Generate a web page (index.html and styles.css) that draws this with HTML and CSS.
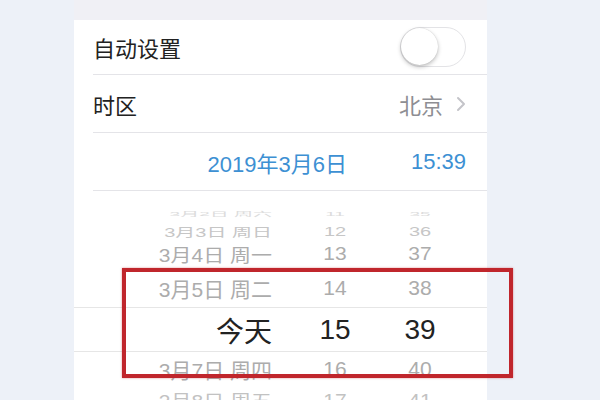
FILE: index.html
```html
<!DOCTYPE html>
<html lang="zh-CN">
<head>
    <meta charset="UTF-8">
    <meta name="viewport" content="width=device-width, initial-scale=1.0">
    <title>日期与时间</title>
    <link rel="stylesheet" href="styles.css">
</head>
<body>
    <div class="screen">
        <div class="group-gap"></div>

        <div class="cell">
            <div class="cell-inner">
                <span class="cell-title">自动设置</span>
                <div class="switch"><div class="knob"></div></div>
            </div>
        </div>

        <div class="cell">
            <div class="cell-inner">
                <span class="cell-title">时区</span>
                <span class="cell-value">北京<span class="chevron">
                    <svg width="10" height="16" viewBox="0 0 10 16"><path d="M2 2 L8 8 L2 14" fill="none" stroke="#c4c4c9" stroke-width="2" stroke-linecap="round" stroke-linejoin="round"/></svg>
                </span></span>
            </div>
        </div>

        <div class="cell">
            <div class="cell-inner date-line">
                <span class="date-text">2019年3月6日</span>
                <span class="time-text">15:39</span>
            </div>
        </div>

        <div class="picker">
            <div class="wheel-row far-3"><span>3月2日 周六</span><span>11</span><span>35</span></div>
            <div class="wheel-row far-2"><span>3月3日 周日</span><span>12</span><span>36</span></div>
            <div class="wheel-row far-1"><span>3月4日 周一</span><span>13</span><span>37</span></div>
            <div class="wheel-row near"><span>3月5日 周二</span><span>14</span><span>38</span></div>
            <div class="wheel-row current"><span>今天</span><span>15</span><span>39</span></div>
            <div class="wheel-row near below"><span>3月7日 周四</span><span>16</span><span>40</span></div>
            <div class="wheel-row far-1 below"><span>3月8日 周五</span><span>17</span><span>41</span></div>
        </div>
    </div>

    <div class="mark"></div>
</body>
</html>
```

FILE: styles.css
```css
body {
    margin: 0;
    height: 400px;
    background-color: #edf1f8;
    font-family: "Liberation Sans", "Noto Sans CJK SC", sans-serif;
    color: #222;
    overflow: hidden;
}

.screen {
    margin-left: 74px;
    width: 413px;
    height: 400px;
    background-color: #fff;
    overflow: hidden;
}

.group-gap {
    height: 20px;
    background-color: #f0f0f5;
}

.cell {
    padding-left: 19px;
}

.cell-inner {
    display: flex;
    align-items: center;
    justify-content: space-between;
    height: 54px;
    padding-right: 21px;
    border-bottom: 1px solid #e4e4e8;
}

.cell + .cell .cell-inner {
    height: 57px;
}

.cell-title {
    font-size: 22px;
}

.cell-value {
    display: flex;
    align-items: center;
    gap: 13px;
    font-size: 22px;
    color: #8e8e93;
}

.chevron {
    display: flex;
}

.switch {
    width: 64px;
    height: 38px;
    border-radius: 20px;
    border: 1px solid #e3e3e6;
    background-color: #fff;
    position: relative;
}

.knob {
    position: absolute;
    left: 0;
    top: 0;
    width: 37px;
    height: 37px;
    border-radius: 50%;
    background-color: #fff;
    box-shadow: 0 2px 4px rgba(0, 0, 0, 0.25), 0 0 1px rgba(0, 0, 0, 0.2);
}

.date-line {
    justify-content: flex-end;
    gap: 64px;
    color: #3d90d3;
    font-size: 22px;
}

/* wheel picker */
.picker {
    padding-top: 14px;
}

.wheel-row {
    display: grid;
    grid-template-columns: 198px 126px 44px;
    align-items: center;
    color: #acacac;
    font-size: 21px;
    white-space: nowrap;
}

.wheel-row span:first-child {
    text-align: right;
}

.wheel-row span {
    text-align: center;
}

.far-3 {
    height: 14px;
    color: #dcdcdc;
    transform: scaleY(0.3);
    font-size: 19px;
}

.far-2 {
    height: 20px;
    color: #c6c6c6;
    transform: scaleY(0.6);
    font-size: 20px;
}

.far-1 {
    height: 30px;
    transform: scaleY(0.85);
}

.near {
    height: 38px;
}

.near.below {
    height: 34px;
}

.far-1.below {
    height: 26px;
    color: #c2c2c2;
}

.current {
    height: 43px;
    border-top: 1px solid #e6e6e6;
    border-bottom: 1px solid #e6e6e6;
    color: #222;
    font-size: 28px;
}

/* red highlight drawn over the screenshot */
.mark {
    position: absolute;
    left: 122px;
    top: 268px;
    width: 383px;
    height: 102px;
    border: 4px solid #c0262c;
    box-shadow: 0 0 2px rgba(192, 38, 44, 0.5);
}
```
